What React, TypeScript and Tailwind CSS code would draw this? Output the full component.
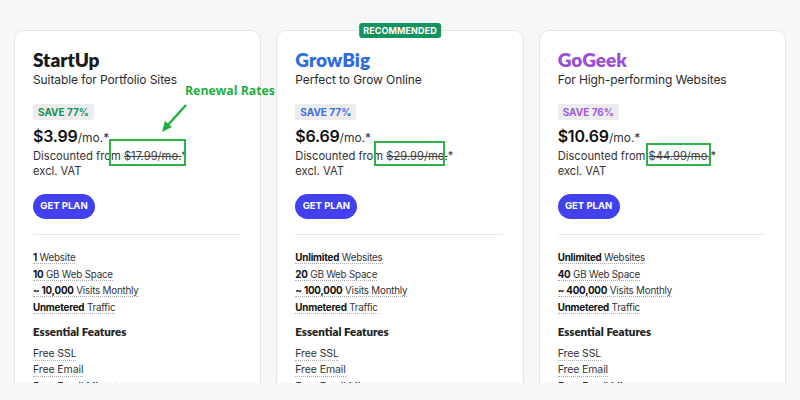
type Feature = { strong: string; rest: string };

type Plan = {
  name: string;
  tagline: string;
  save: string;
  price: string;
  was: string;
  titleColor: string;
  saveColor: string;
  features: Feature[];
};

const plans: Plan[] = [
  {
    name: "StartUp",
    tagline: "Suitable for Portfolio Sites",
    save: "SAVE 77%",
    price: "$3.99",
    was: "$17.99/mo.",
    titleColor: "text-[#1a1a1a]",
    saveColor: "text-[#16905e]",
    features: [
      { strong: "1", rest: "Website" },
      { strong: "10", rest: "GB Web Space" },
      { strong: "~ 10,000", rest: "Visits Monthly" },
      { strong: "Unmetered", rest: "Traffic" },
    ],
  },
  {
    name: "GrowBig",
    tagline: "Perfect to Grow Online",
    save: "SAVE 77%",
    price: "$6.69",
    was: "$29.99/mo.",
    titleColor: "text-[#2f6be3]",
    saveColor: "text-[#3b6fe0]",
    features: [
      { strong: "Unlimited", rest: "Websites" },
      { strong: "20", rest: "GB Web Space" },
      { strong: "~ 100,000", rest: "Visits Monthly" },
      { strong: "Unmetered", rest: "Traffic" },
    ],
  },
  {
    name: "GoGeek",
    tagline: "For High-performing Websites",
    save: "SAVE 76%",
    price: "$10.69",
    was: "$44.99/mo.",
    titleColor: "text-[#9a4ed8]",
    saveColor: "text-[#a058dc]",
    features: [
      { strong: "Unlimited", rest: "Websites" },
      { strong: "40", rest: "GB Web Space" },
      { strong: "~ 400,000", rest: "Visits Monthly" },
      { strong: "Unmetered", rest: "Traffic" },
    ],
  },
];

const extras = ["Free SSL", "Free Email", "Free Email Migrator"];

function PlanCard({ plan, recommended }: { plan: Plan; recommended?: boolean }) {
  return (
    <div className="relative h-[420px] rounded-[10px] border border-[#e4e4e4] bg-white px-[18px] pt-[18px]">
      {recommended && (
        <div className="absolute left-1/2 top-[-8px] -translate-x-1/2 rounded-[3px] bg-[#14935f] px-[4px] text-[9px] font-bold leading-[15px] tracking-[0.1px] text-white">
          RECOMMENDED
        </div>
      )}
      <div
        className={`text-[19px] leading-[22px] ${plan.titleColor}`}
        style={{ fontFamily: "Lato, Inter, sans-serif", fontWeight: 800 }}
      >
        {plan.name}
      </div>
      <div className="text-[12px] leading-[18px] tracking-[-0.1px] text-[#2b2b2b]">{plan.tagline}</div>

      <div className="mt-[15px] flex">
        <span className={`rounded-[3px] bg-[#ececec] px-[5px] text-[10px] font-bold leading-[16px] ${plan.saveColor}`}>
          {plan.save}
        </span>
      </div>

      <div className="mt-[6px] leading-[20px] text-[#111]">
        <span className="text-[16px] font-semibold tracking-[-0.2px]">{plan.price}</span>
        <span className="text-[12px] text-[#333]">/mo.*</span>
      </div>
      <div className="text-[11.2px] leading-[16px] text-[#333]">
        Discounted from <span className="text-[#444] line-through">{plan.was}</span>*
      </div>
      <div className="text-[11.2px] leading-[15px] text-[#333]">excl. VAT</div>

      <button className="mt-[15px] h-[25px] w-[62px] rounded-full bg-[#4141ef] text-[9.5px] font-bold text-white">
        GET PLAN
      </button>

      <div className="mt-[15px] mr-[2px] border-t border-[#e9e9e9]" />

      <div className="mt-[15px] flex flex-col items-start">
        {plan.features.map((f) => (
          <div key={f.rest + f.strong} className="text-[9.8px] leading-[16.7px] tracking-[-0.2px] text-[#333]">
            <span className="border-b border-dotted border-[#aaa]">
              <b className="font-bold text-[#111]">{f.strong}</b> {f.rest}
            </span>
          </div>
        ))}
      </div>

      <div
        className="mt-[6px] text-[11.5px] leading-[18px] text-[#222]"
        style={{ fontFamily: "Lato, Inter, sans-serif", fontWeight: 800 }}
      >
        Essential Features
      </div>

      <div className="mt-[5px] flex flex-col items-start">
        {extras.map((e) => (
          <div key={e} className="text-[10.5px] leading-[16.5px] tracking-[-0.1px] text-[#333]">
            <span className="border-b border-dotted border-[#aaa]">{e}</span>
          </div>
        ))}
      </div>
    </div>
  );
}

export default function App() {
  return (
    <div className="relative h-[400px] w-[800px] overflow-hidden bg-[#f7f7f7]" style={{ fontFamily: "Inter, sans-serif" }}>
      <div className="h-[383px] overflow-hidden px-[14px] pt-[30px]">
        <div className="grid grid-cols-3 gap-[15px]">
          {plans.map((p, i) => (
            <PlanCard key={p.name} plan={p} recommended={i === 1} />
          ))}
        </div>
      </div>

      {/* annotation overlay */}
      <div
        className="absolute left-[185px] top-[83px] text-[12.3px] font-bold leading-[16px] text-[#22b03c]"
        style={{ fontFamily: "'Open Sans', sans-serif" }}
      >
        Renewal Rates
      </div>
      <svg className="absolute left-[155px] top-[100px]" width="40" height="40" viewBox="0 0 40 40">
        <line x1="31" y1="5" x2="12" y2="26" stroke="#22b03c" strokeWidth="2.5" />
        <polygon points="7,32 10,21 17,27" fill="#22b03c" />
      </svg>
      <div className="absolute left-[109px] top-[139px] h-[27px] w-[77px] border-2 border-[#2db34a]" />
      <div className="absolute left-[374px] top-[141px] h-[25px] w-[71px] border-2 border-[#2db34a]" />
      <div className="absolute left-[646px] top-[143px] h-[23px] w-[65px] border-2 border-[#2db34a]" />
    </div>
  );
}
